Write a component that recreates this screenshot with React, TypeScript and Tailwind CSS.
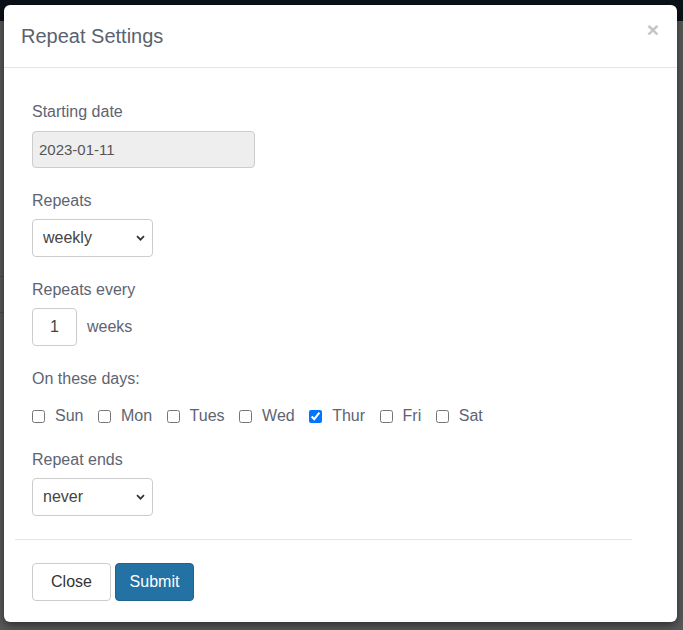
import React from 'react'

const days = ['Sun', 'Mon', 'Tues', 'Wed', 'Thur', 'Fri', 'Sat']

function Chevron() {
  return (
    <svg
      className="pointer-events-none absolute right-[8px] top-1/2 -translate-y-1/2"
      width="9"
      height="6"
      viewBox="0 0 9 6"
      fill="none"
    >
      <path d="M1 1.2 L4.5 4.7 L8 1.2" stroke="#333" strokeWidth="1.7" />
    </svg>
  )
}

function Select({ value }: { value: string }) {
  return (
    <div className="relative mt-[6px] h-[38px] w-[121px]">
      <select
        defaultValue={value}
        className="h-full w-full appearance-none rounded-[4px] border border-[#ccc] bg-white pl-[10px] text-[16px] text-[#444] outline-none"
      >
        <option value="never">never</option>
        <option value="daily">daily</option>
        <option value="weekly">weekly</option>
        <option value="monthly">monthly</option>
      </select>
      <Chevron />
    </div>
  )
}

function Label({ children, className = '' }: { children: React.ReactNode; className?: string }) {
  return <div className={`text-[16px] leading-[24px] text-[#5e6472] ${className}`}>{children}</div>
}

export default function App() {
  return (
    <div className="relative min-h-[630px] w-full overflow-hidden bg-[#595959] font-['Liberation_Sans',Arial,sans-serif]">
      {/* page behind the overlay */}
      <div className="h-[21px] bg-[#0b1118]" />
      <div className="mt-[255px] h-px w-[6px] bg-[#4a4a4a]" />
      <div className="mt-[35px] h-px w-[6px] bg-[#4a4a4a]" />

      <div className="absolute left-[4px] top-[5px] w-[673px] rounded-[6px] bg-white shadow-[0_3px_9px_rgba(0,0,0,0.5)]">
        <div className="flex h-[63px] items-start justify-between border-b border-[#e5e5e5] pl-[17px] pr-[18px]">
          <h4 className="mt-[21px] text-[20px] leading-[20px] text-[#5b6270]">Repeat Settings</h4>
          <button className="mt-[14px] text-[21px] font-bold leading-[21px] text-[#c4c4c4]">×</button>
        </div>

        <div className="px-[28px] pt-[32px]">
          <Label>Starting date</Label>
          <input
            readOnly
            value="2023-01-11"
            className="mt-[7px] block h-[37px] w-[223px] rounded-[4px] border border-[#ccc] bg-[#eee] px-[6px] text-[15px] text-[#555] outline-none"
          />

          <Label className="mt-[21px]">Repeats</Label>
          <Select value="weekly" />

          <Label className="mt-[21px]">Repeats every</Label>
          <div className="mt-[6px] flex h-[38px] items-center">
            <input
              readOnly
              value="1"
              className="h-full w-[45px] rounded-[4px] border border-[#ccc] bg-white text-center text-[16px] text-[#444] outline-none"
            />
            <span className="ml-[10px] text-[16px] text-[#5e6472]">weeks</span>
          </div>

          <Label className="mt-[21px]">On these days:</Label>
          <div className="mt-[13px] flex h-[24px] items-center gap-[14.5px]">
            {days.map((d) => (
              <label key={d} className="flex items-center gap-[10px] text-[16px] text-[#5e6472]">
                <input type="checkbox" defaultChecked={d === 'Thur'} className="m-0 h-[13px] w-[13px]" />
                {d}
              </label>
            ))}
          </div>

          <Label className="mt-[20px]">Repeat ends</Label>
          <Select value="never" />
        </div>

        <div className="ml-[11px] mt-[23px] h-px w-[617px] bg-[#e5e5e5]" />

        <div className="flex gap-[4px] px-[28px] pb-[21px] pt-[23px]">
          <button className="h-[38px] w-[79px] rounded-[4px] border border-[#ccc] bg-white text-[16px] text-[#333]">
            Close
          </button>
          <button className="h-[38px] w-[79px] rounded-[4px] border border-[#1f6391] bg-[#2471a3] text-[16px] text-white">
            Submit
          </button>
        </div>
      </div>
    </div>
  )
}
